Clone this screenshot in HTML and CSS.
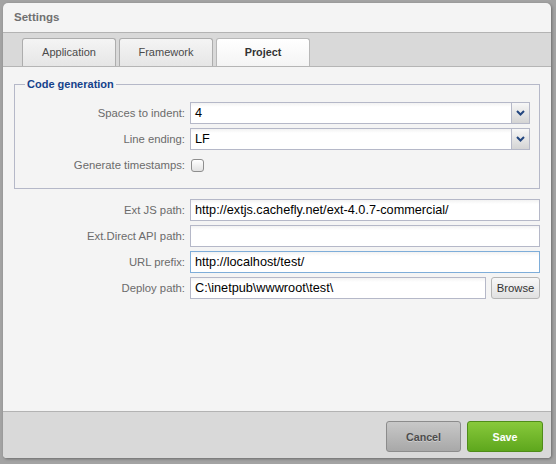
FILE: index.html
```html
<!DOCTYPE html>
<html>
<head>
<meta charset="utf-8">
<link rel="stylesheet" href="styles.css">
</head>
<body>
<div class="window">
  <div class="header">Settings</div>
  <div class="tabbar">
    <div class="tab">Application</div>
    <div class="tab">Framework</div>
    <div class="tab active">Project</div>
  </div>
  <div class="content">
    <fieldset class="group">
      <legend>Code generation</legend>
      <div class="grid inset">
        <label>Spaces to indent:</label>
        <div class="field combo"><span class="val">4</span><span class="trigger"><svg width="9" height="6" viewBox="0 0 9 6"><path d="M1 1 L4.5 4.5 L8 1" fill="none" stroke="#23467f" stroke-width="2"/></svg></span></div>
        <label>Line ending:</label>
        <div class="field combo"><span class="val">LF</span><span class="trigger"><svg width="9" height="6" viewBox="0 0 9 6"><path d="M1 1 L4.5 4.5 L8 1" fill="none" stroke="#23467f" stroke-width="2"/></svg></span></div>
        <label>Generate timestamps:</label>
        <div class="checkcell"><span class="checkbox"></span></div>
      </div>
    </fieldset>
    <div class="grid outer">
      <label>Ext JS path:</label>
      <div class="field">http://extjs.cachefly.net/ext-4.0.7-commercial/</div>
      <label>Ext.Direct API path:</label>
      <div class="field"></div>
      <label>URL prefix:</label>
      <div class="field focus">http://localhost/test/</div>
      <label>Deploy path:</label>
      <div class="browse-row">
        <div class="field grow">C:\inetpub\wwwroot\test\</div>
        <button class="browse">Browse</button>
      </div>
    </div>
  </div>
  <div class="footer">
    <button class="btn cancel">Cancel</button>
    <button class="btn save">Save</button>
  </div>
</div>
</body>
</html>
```

FILE: styles.css
```css
html, body {
  margin: 0;
  padding: 0;
}
body {
  background: #a3a3a3;
  width: 556px;
  height: 464px;
  overflow: hidden;
  font-family: "Liberation Sans", Arial, sans-serif;
}
.window {
  margin: 3px 0 0 3px;
  width: 548px;
  height: 455px;
  background: #f4f4f4;
  border-radius: 5px 5px 4px 4px;
  overflow: hidden;
  box-shadow: 1px 1px 3px rgba(0, 0, 0, 0.35);
  display: flex;
  flex-direction: column;
}
.header {
  height: 29px;
  line-height: 29px;
  padding-left: 11px;
  font-size: 11.5px;
  font-weight: bold;
  color: #707070;
  border-bottom: 1px solid #b3b3b3;
  flex: none;
}
.tabbar {
  height: 28px;
  padding: 5px 0 0 19px;
  background: #d9d9d9;
  border-bottom: 1px solid #b5b5b5;
  display: flex;
  gap: 3px;
  flex: none;
}
.tab {
  width: 94px;
  height: 28px;
  box-sizing: border-box;
  border: 1px solid #adadad;
  border-bottom: none;
  border-radius: 3px 3px 0 0;
  background: linear-gradient(#f4f4f4, #e6e6e6);
  text-align: center;
  line-height: 27px;
  font-size: 11px;
  color: #4a4a4a;
}
.tab.active {
  background: linear-gradient(#ffffff, #f4f4f4);
  font-weight: bold;
  font-size: 10.8px;
  color: #333;
  border-color: #b8b8b8;
}
.content {
  height: 344px;
  box-sizing: border-box;
  padding: 11px 11px 0 11px;
  flex: none;
}
.group {
  margin: 0;
  border: 1px solid #b5b8c8;
  padding: 11px 9px 12px 10px;
}
.group legend {
  padding: 0 2px;
  font-size: 11px;
  line-height: 13px;
  font-weight: bold;
  color: #15428b;
}
.grid {
  display: grid;
  column-gap: 5px;
  row-gap: 4px;
  align-items: center;
}
.grid.inset {
  grid-template-columns: 160px 1fr;
}
.grid.outer {
  grid-template-columns: 171px 1fr;
  margin-top: 10px;
}
.grid label {
  text-align: right;
  font-size: 11.3px;
  color: #6b6b6b;
  line-height: 22px;
}
.field {
  height: 22px;
  box-sizing: border-box;
  border: 1px solid #b5b8c8;
  background: linear-gradient(#f2f2f2, #ffffff 4px);
  font-size: 12.7px;
  line-height: 20px;
  padding: 0 4px;
  color: #000;
  white-space: nowrap;
  overflow: hidden;
}
.field.focus {
  border-color: #7eadd9;
}
.combo {
  display: flex;
  padding-right: 0;
}
.combo .val {
  flex: 1;
}
.trigger {
  width: 17px;
  height: 20px;
  border-left: 1px solid #b5b8c8;
  background: linear-gradient(#f7f7f7, #d4d4d4);
  display: flex;
  align-items: center;
  justify-content: center;
}
.trigger svg {
  display: block;
}
.checkcell {
  height: 22px;
  display: flex;
  align-items: center;
}
.checkbox {
  margin-left: 1px;
  width: 13px;
  height: 13px;
  box-sizing: border-box;
  border: 1px solid #8e8e8e;
  border-radius: 3px;
  background: linear-gradient(#ffffff, #e2e2e2);
}
.browse-row {
  display: flex;
  gap: 5px;
}
.grow {
  flex: 1;
}
.browse {
  width: 49px;
  height: 22px;
  box-sizing: border-box;
  border: 1px solid #b5b5b5;
  border-radius: 3px;
  background: linear-gradient(#f8f8f8, #e1e1e1);
  font-family: "Liberation Sans", Arial, sans-serif;
  font-size: 11.3px;
  color: #333;
  padding: 0;
}
.footer {
  flex: 1;
  border-top: 1px solid #b3b3b3;
  background: #d9d9d9;
  display: flex;
  justify-content: flex-end;
  align-items: flex-start;
  gap: 6px;
  padding: 9px 8px 0 0;
}
.btn {
  height: 31px;
  box-sizing: border-box;
  border-radius: 3px;
  font-family: "Liberation Sans", Arial, sans-serif;
  font-size: 10.7px;
  font-weight: bold;
  padding: 0;
}
.cancel {
  width: 75px;
  border: 1px solid #8c8c8c;
  background: linear-gradient(#c8c8c8, #a8a8a8);
  color: #4d4d4d;
  text-shadow: 0 1px 0 rgba(255, 255, 255, 0.35);
}
.save {
  width: 76px;
  border: 1px solid #4f8c19;
  background: linear-gradient(#88c93b, #5ea71d);
  color: #fff;
}
```
